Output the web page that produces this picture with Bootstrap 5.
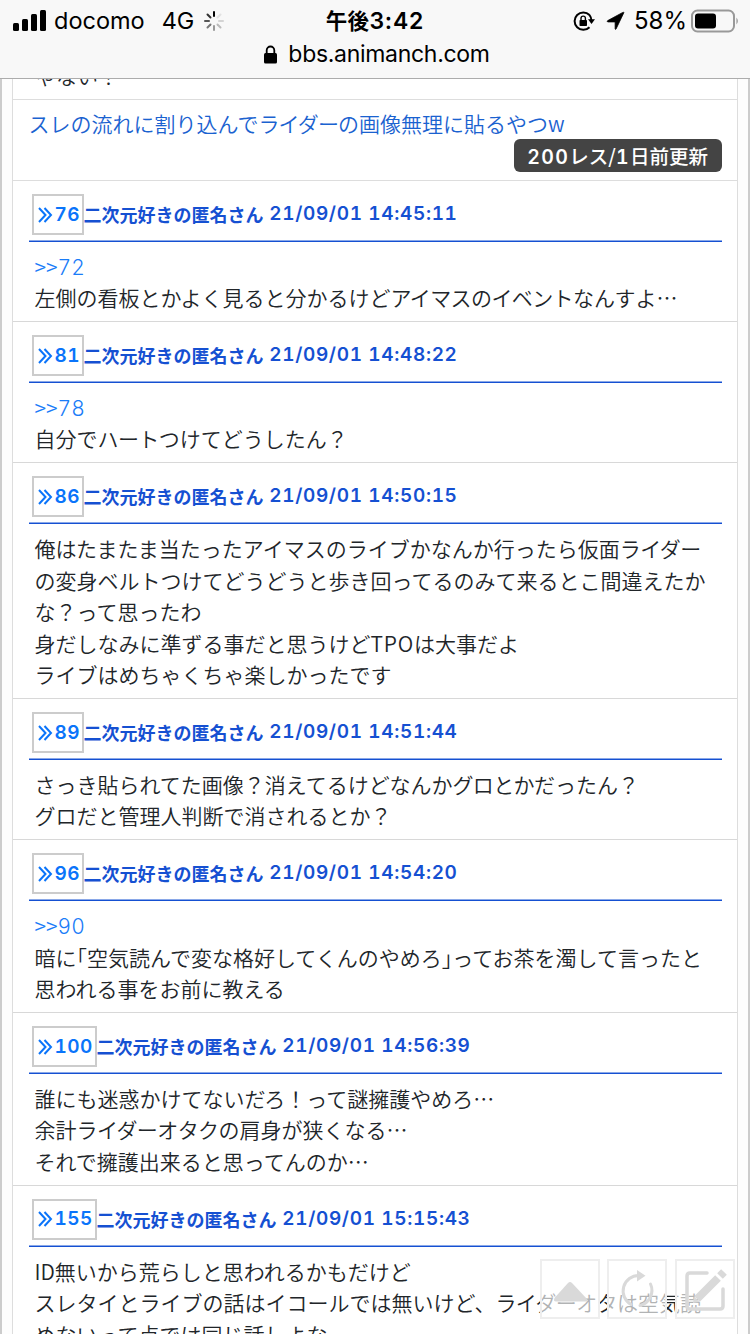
<!DOCTYPE html>
<html lang="ja">
<head>
<meta charset="utf-8">
<meta name="viewport" content="width=device-width, initial-scale=1">
<title>bbs.animanch.com</title>
<link href="https://cdn.jsdelivr.net/npm/bootstrap@5.3.0/dist/css/bootstrap.min.css" rel="stylesheet">
<style>
html,body{height:1334px;overflow:hidden}
body{font-family:"Noto Sans CJK JP",sans-serif;font-size:21px;line-height:31.5px;color:#212529;background:#fdfdfd;-webkit-text-size-adjust:none}
.phone-bar{height:79px;background:#f8f8f8;border-bottom:1px solid #acacac;font-family:Inter,"Noto Sans CJK JP",sans-serif;color:#000;font-size:23.5px;line-height:28px}
.phone-bar .line-a{height:41px;padding:0 11px 0 13px}
.phone-bar .side{flex:1 1 0}
.carrier{margin-left:8px}
.net{margin-left:17px}
.spin{margin-left:9px}
.clock{font-weight:600;font-size:23px;letter-spacing:.8px;margin-left:-2px}
.clock .ap{font-weight:700;font-size:21.5px;letter-spacing:.3px}
.rot{margin-right:1px}
.arrow{margin-left:10px}
.pct{margin-left:9px;font-size:24px}
.batt{margin-left:4px}
.addr{height:26px;padding-left:4px}
.site{margin-left:10px;font-size:23px;letter-spacing:-.3px}
.page-frame{height:1255px;overflow:hidden;border-left:2px solid #ccc;border-right:2px solid #ccc;padding:0 10px}
.thread{height:1255px;overflow:hidden;background:#fff;border:solid #ddd;border-width:0 1.5px;width:726px}
.tail{height:21px;border-bottom:1px solid #ddd;padding-left:22px;overflow:hidden}
.tail div{margin-bottom:8px}
.thin{font-weight:350}
.topic{height:81px;border-bottom:1px solid #ddd;padding:8px 15.5px 0 15.5px}
.topic a{color:#1a62d0}
.topic .kk{letter-spacing:-.9px}
.count{background:#444;color:#fff;border-radius:6px;font-size:19.5px;font-weight:500;line-height:33px;height:33px;padding:0 13.5px;margin-top:-.5px}
.res{border-bottom:1px solid #d8d8d8;padding:0 15.5px}
.res-head{height:61px;border-bottom:1px solid #1550d2;box-shadow:inset 0 -1px #8aa8e8;color:#1550d2;font-size:18px;font-weight:700;padding:13px 0 0 3px;line-height:40px;white-space:pre}
.num{height:41px;border:2px solid #ccc;color:#0a74fa;padding:0 0 0 4px;width:52px}
.num.wide{width:65px}
.num svg{margin-right:2px}
.res-body{padding:8.6px 0 7.65px 6px;font-weight:350}
.res-body a{color:#1a7cf8}
.br{font-feature-settings:"halt"}
.d,.q{font-family:Inter,sans-serif;font-feature-settings:"tnum"}
.d{font-weight:600;letter-spacing:.65px}
.res-head .d{font-size:19px}
.num .d{letter-spacing:.5px}
.count .d{letter-spacing:1.4px;line-height:1}
.q{font-weight:300;line-height:1}
.kk{letter-spacing:-.6px}
.tpo{letter-spacing:.8px}
.tools{left:540px;top:1259px;gap:7.4px}
.tool{width:60px;height:60px;background:rgba(255,255,255,.65);border:2px solid #eee}
</style>
</head>
<body class="position-relative">
<header class="phone-bar">
  <div class="line-a d-flex align-items-center">
    <div class="side d-flex align-items-center">
      <svg width="33" height="22" viewBox="0 0 33 22"><rect x="0" y="13" width="6" height="8" rx="1.5"/><rect x="9" y="9" width="6" height="12" rx="1.5"/><rect x="18" y="4" width="6" height="17" rx="1.5"/><rect x="27" y="0" width="6" height="21" rx="1.5"/></svg>
      <span class="carrier">docomo</span><span class="net">4G</span>
      <svg class="spin" width="22" height="22" viewBox="-11 -11 22 22" stroke-width="2" stroke-linecap="round"><path d="M0-5V-9" stroke="#000"/><path d="M3.5-3.5L6.5-6.5" stroke="#e2e2e2"/><path d="M5 0H9" stroke="#d4d4d4"/><path d="M3.5 3.5L6.5 6.5" stroke="#bbb"/><path d="M0 5V9" stroke="#999"/><path d="M-3.5 3.5L-6.5 6.5" stroke="#777"/><path d="M-5 0H-9" stroke="#555"/><path d="M-3.5-3.5L-6.5-6.5" stroke="#333"/></svg>
    </div>
    <div class="clock"><span class="ap">午後</span>3:42</div>
    <div class="side d-flex align-items-center justify-content-end">
      <svg class="rot" width="22" height="20" viewBox="0 0 22 20"><path d="M16.5 4A8.7 8.7 0 1 0 16.5 16.2M16.5 4A8.7 8.7 0 0 1 18.3 9" fill="none" stroke="#000" stroke-width="2"/><path d="M15 8.2H22L18.5 13Z"/><rect x="6.5" y="9" width="7.5" height="6" rx=".8"/><path d="M8 9V7.3a2.2 2.2 0 0 1 4.4 0V9" fill="none" stroke="#000" stroke-width="1.4"/></svg>
      <svg class="arrow" width="19" height="20" viewBox="0 0 20 20"><path d="M18.800 1.200 10.600 18.400Q10 19.500 9.600 18.200V11H2.200Q.2 10.500 1.800 9.600L17.600 1Q19 .3 18.800 1.200Z" stroke="#000" stroke-width=".8"/></svg>
      <span class="pct">58%</span>
      <svg class="batt" width="48" height="24" viewBox="0 0 48 24"><rect x="1" y="1.500" width="42" height="21" rx="5.500" fill="none" stroke="#999" stroke-width="2"/><rect x="4" y="4.500" width="21" height="15" rx="3"/><path d="M45.500 8.500q2.500 3.500 0 7Z" fill="#888"/></svg>
    </div>
  </div>
  <div class="addr d-flex justify-content-center align-items-center">
    <svg width="14" height="19" viewBox="0 0 14 19"><rect x="0" y="8" width="13" height="10.500" rx="1.500"/><path d="M2.700 9V5.300a3.800 3.800 0 0 1 7.600 0V9" fill="none" stroke="#000" stroke-width="1.800"/></svg>
    <span class="site">bbs.animanch.com</span>
  </div>
</header>
<main class="page-frame">
<div class="thread">
  <div class="tail d-flex align-items-end"><div class="thin">ゃない！</div></div>
  <div class="topic"><a class="text-decoration-none thin d-block" href="#">スレの流れに割り込んで<span class="kk">ライダー</span>の画像無理に貼るやつw</a><div class="d-flex justify-content-end"><span class="count"><span class="d">200</span>レス/<span class="d">1</span>日前更新</span></div></div>

  <article class="res"><div class="res-head d-flex"><span class="num d-flex align-items-center"><svg width="15" height="16" viewBox="0 0 15 16"><path d="M1 1 7.5 8 1 15M6.5 1 13 8 6.5 15" fill="none" stroke="#0a74fa" stroke-width="2"/></svg><span class="d">76</span></span>二次元好きの匿名さん<span class="d"> 21/09/01 14:45:11</span></div>
  <div class="res-body"><a class="text-decoration-none" href="#">&gt;&gt;<span class="q">72</span></a><br>左側の看板とかよく見ると分かるけど<span class="kk">アイマスのイベント</span>なんすよ…</div></article>

  <article class="res"><div class="res-head d-flex"><span class="num d-flex align-items-center"><svg width="15" height="16" viewBox="0 0 15 16"><path d="M1 1 7.5 8 1 15M6.5 1 13 8 6.5 15" fill="none" stroke="#0a74fa" stroke-width="2"/></svg><span class="d">81</span></span>二次元好きの匿名さん<span class="d"> 21/09/01 14:48:22</span></div>
  <div class="res-body"><a class="text-decoration-none" href="#">&gt;&gt;<span class="q">78</span></a><br>自分で<span class="kk">ハート</span>つけてどうしたん？</div></article>

  <article class="res"><div class="res-head d-flex"><span class="num d-flex align-items-center"><svg width="15" height="16" viewBox="0 0 15 16"><path d="M1 1 7.5 8 1 15M6.5 1 13 8 6.5 15" fill="none" stroke="#0a74fa" stroke-width="2"/></svg><span class="d">86</span></span>二次元好きの匿名さん<span class="d"> 21/09/01 14:50:15</span></div>
  <div class="res-body">俺はたまたま当たったアイマスのライブかなんか行ったら仮面<span class="kk">ライダー</span><br>の変身ベルトつけてどうどうと歩き回ってるのみて来るとこ間違えたか<br>な？って思ったわ<br>身だしなみに準ずる事だと思うけど<span class="tpo">TPO</span>は大事だよ<br>ライブはめちゃくちゃ楽しかったです</div></article>

  <article class="res"><div class="res-head d-flex"><span class="num d-flex align-items-center"><svg width="15" height="16" viewBox="0 0 15 16"><path d="M1 1 7.5 8 1 15M6.5 1 13 8 6.5 15" fill="none" stroke="#0a74fa" stroke-width="2"/></svg><span class="d">89</span></span>二次元好きの匿名さん<span class="d"> 21/09/01 14:51:44</span></div>
  <div class="res-body">さっき貼られてた画像？消えてるけどなんか<span class="kk">グロとか</span>だったん？<br>グロだと管理人判断で消されるとか？</div></article>

  <article class="res"><div class="res-head d-flex"><span class="num d-flex align-items-center"><svg width="15" height="16" viewBox="0 0 15 16"><path d="M1 1 7.5 8 1 15M6.5 1 13 8 6.5 15" fill="none" stroke="#0a74fa" stroke-width="2"/></svg><span class="d">96</span></span>二次元好きの匿名さん<span class="d"> 21/09/01 14:54:20</span></div>
  <div class="res-body"><a class="text-decoration-none" href="#">&gt;&gt;<span class="q">90</span></a><br>暗に<span class="br">「</span>空気読んで変な格好してくんのやめろ<span class="br">」</span>ってお茶を濁して言ったと<br>思われる事をお前に教える</div></article>

  <article class="res"><div class="res-head d-flex"><span class="num wide d-flex align-items-center"><svg width="15" height="16" viewBox="0 0 15 16"><path d="M1 1 7.5 8 1 15M6.5 1 13 8 6.5 15" fill="none" stroke="#0a74fa" stroke-width="2"/></svg><span class="d">100</span></span>二次元好きの匿名さん<span class="d"> 21/09/01 14:56:39</span></div>
  <div class="res-body">誰にも迷惑かけてないだろ！って謎擁護やめろ…<br>余計<span class="kk">ライダーオタク</span>の肩身が狭くなる…<br>それで擁護出来ると思ってんのか…</div></article>

  <article class="res"><div class="res-head d-flex"><span class="num wide d-flex align-items-center"><svg width="15" height="16" viewBox="0 0 15 16"><path d="M1 1 7.5 8 1 15M6.5 1 13 8 6.5 15" fill="none" stroke="#0a74fa" stroke-width="2"/></svg><span class="d">155</span></span>二次元好きの匿名さん<span class="d"> 21/09/01 15:15:43</span></div>
  <div class="res-body">ID無いから荒らしと思われるかもだけど<br>スレタイとライブの話はイコールでは無いけど、<span class="kk">ライダーオタ</span>は空気読<br>めないって点では同じ話しよな</div></article>
</div>
</main>
<nav class="tools d-flex position-absolute">
  <div class="tool"><svg class="d-block" width="56" height="56" viewBox="0 0 56 56"><path d="M12.500 37 26 22q2-2 4 0l15 16q2 2.500-1 2.500H14q-3 0-1.500-3.500Z" fill="#d9d9d9"/></svg></div>
  <div class="tool"><svg class="d-block" width="56" height="56" viewBox="0 0 56 56"><path d="M30 14.500A15.500 15.500 0 0 0 22 43.500M41.500 23A15.500 15.500 0 0 1 31 44.500" fill="none" stroke="#d9d9d9" stroke-width="3" stroke-linecap="round"/><path d="M28 9V20.500L36.500 14.700Z" fill="#d9d9d9"/></svg></div>
  <div class="tool"><svg class="d-block" width="56" height="56" viewBox="0 0 56 56" fill="none" stroke="#d9d9d9"><path d="M30 12H13q-3 0-3 3V45q0 3 3 3H43q3 0 3-3V28" stroke-width="3.500" stroke-linecap="round"/><path d="M20 38 41 17" stroke-width="8"/><path d="M16 42 17 35.500 22.500 41Z" fill="#d9d9d9" stroke="none"/><path d="M43 15 47 11" stroke-width="8"/></svg></div>
</nav>
<script src="https://cdn.jsdelivr.net/npm/bootstrap@5.3.0/dist/js/bootstrap.bundle.min.js"></script>
</body>
</html>
